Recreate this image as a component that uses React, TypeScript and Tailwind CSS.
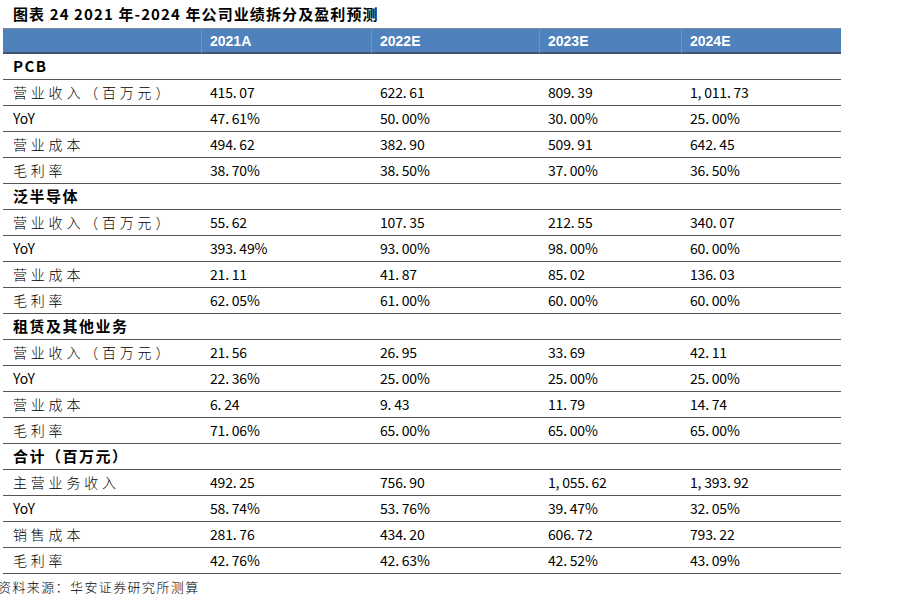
import React from "react";

type Row = { label: string; vals: string[] };

const sections: { title: string; rows: Row[] }[] = [
  {
    title: "PCB",
    rows: [
      { label: "营业收入（百万元）", vals: ["415.07", "622.61", "809.39", "1,011.73"] },
      { label: "YoY", vals: ["47.61%", "50.00%", "30.00%", "25.00%"] },
      { label: "营业成本", vals: ["494.62", "382.90", "509.91", "642.45"] },
      { label: "毛利率", vals: ["38.70%", "38.50%", "37.00%", "36.50%"] },
    ],
  },
  {
    title: "泛半导体",
    rows: [
      { label: "营业收入（百万元）", vals: ["55.62", "107.35", "212.55", "340.07"] },
      { label: "YoY", vals: ["393.49%", "93.00%", "98.00%", "60.00%"] },
      { label: "营业成本", vals: ["21.11", "41.87", "85.02", "136.03"] },
      { label: "毛利率", vals: ["62.05%", "61.00%", "60.00%", "60.00%"] },
    ],
  },
  {
    title: "租赁及其他业务",
    rows: [
      { label: "营业收入（百万元）", vals: ["21.56", "26.95", "33.69", "42.11"] },
      { label: "YoY", vals: ["22.36%", "25.00%", "25.00%", "25.00%"] },
      { label: "营业成本", vals: ["6.24", "9.43", "11.79", "14.74"] },
      { label: "毛利率", vals: ["71.06%", "65.00%", "65.00%", "65.00%"] },
    ],
  },
  {
    title: "合计（百万元）",
    rows: [
      { label: "主营业务收入", vals: ["492.25", "756.90", "1,055.62", "1,393.92"] },
      { label: "YoY", vals: ["58.74%", "53.76%", "39.47%", "32.05%"] },
      { label: "销售成本", vals: ["281.76", "434.20", "606.72", "793.22"] },
      { label: "毛利率", vals: ["42.76%", "42.63%", "42.52%", "43.09%"] },
    ],
  },
];

const cols = "grid grid-cols-[199px_170px_168px_142px_159px]";
const cjk = { fontFamily: '"Noto Sans CJK SC", sans-serif' };

// digits in the source use a CJK font where the separators are wide
function num(v: string) {
  return v.replace(/\./g, ". ").replace(/,/g, ", ");
}

export default function App() {
  return (
    <div className="w-[897px] h-[605px] bg-white text-black relative overflow-hidden" style={cjk}>
      <div className="pl-[13px] pt-[4px] h-[28px] text-[15px] font-bold leading-[20px] tracking-[1.1px] whitespace-pre">
        图表 24 2021 年-2024 年公司业绩拆分及盈利预测
      </div>
      <div className="ml-[3px] w-[838px]">
        <div className={`${cols} h-[26px] bg-[#4f81bd] border-t border-[#7a8a9c] border-b-2 border-b-[#44546a] text-white text-[14px] font-bold`}
          style={{ fontFamily: '"Liberation Sans", "Noto Sans CJK SC", sans-serif' }}>
          <div className="border-r border-[#6d93c7]" />
          {["2021A", "2022E", "2023E", "2024E"].map((y, i) => (
            <div key={y} className={`pl-[8px] leading-[24px] ${i < 3 ? "border-r border-[#6d93c7]" : ""}`}>{y}</div>
          ))}
        </div>
        {sections.map((s) => (
          <div key={s.title}>
            <div className="h-[26px] border-b border-[#555] pl-[10px] text-[15px] font-bold leading-[24px] tracking-[1.5px]">
              {s.title}
            </div>
            {s.rows.map((r, idx) => (
              <div key={idx} className={`${cols} h-[26px] border-b border-[#555] text-[14px] leading-[24px]`}>
                <div className={`pl-[10px] ${r.label === "YoY" ? "" : "tracking-[3.8px] font-light"}`}>{r.label}</div>
                {r.vals.map((v, i) => (
                  <div key={i} className="pl-[8px] whitespace-pre text-[14px] tracking-[-0.2px]">{num(v)}</div>
                ))}
              </div>
            ))}
          </div>
        ))}
      </div>
      <div className="-ml-[2px] mt-[4px] text-[13px] leading-[18px] tracking-[1.4px] font-light">
        资料来源：华安证券研究所测算
      </div>
    </div>
  );
}
